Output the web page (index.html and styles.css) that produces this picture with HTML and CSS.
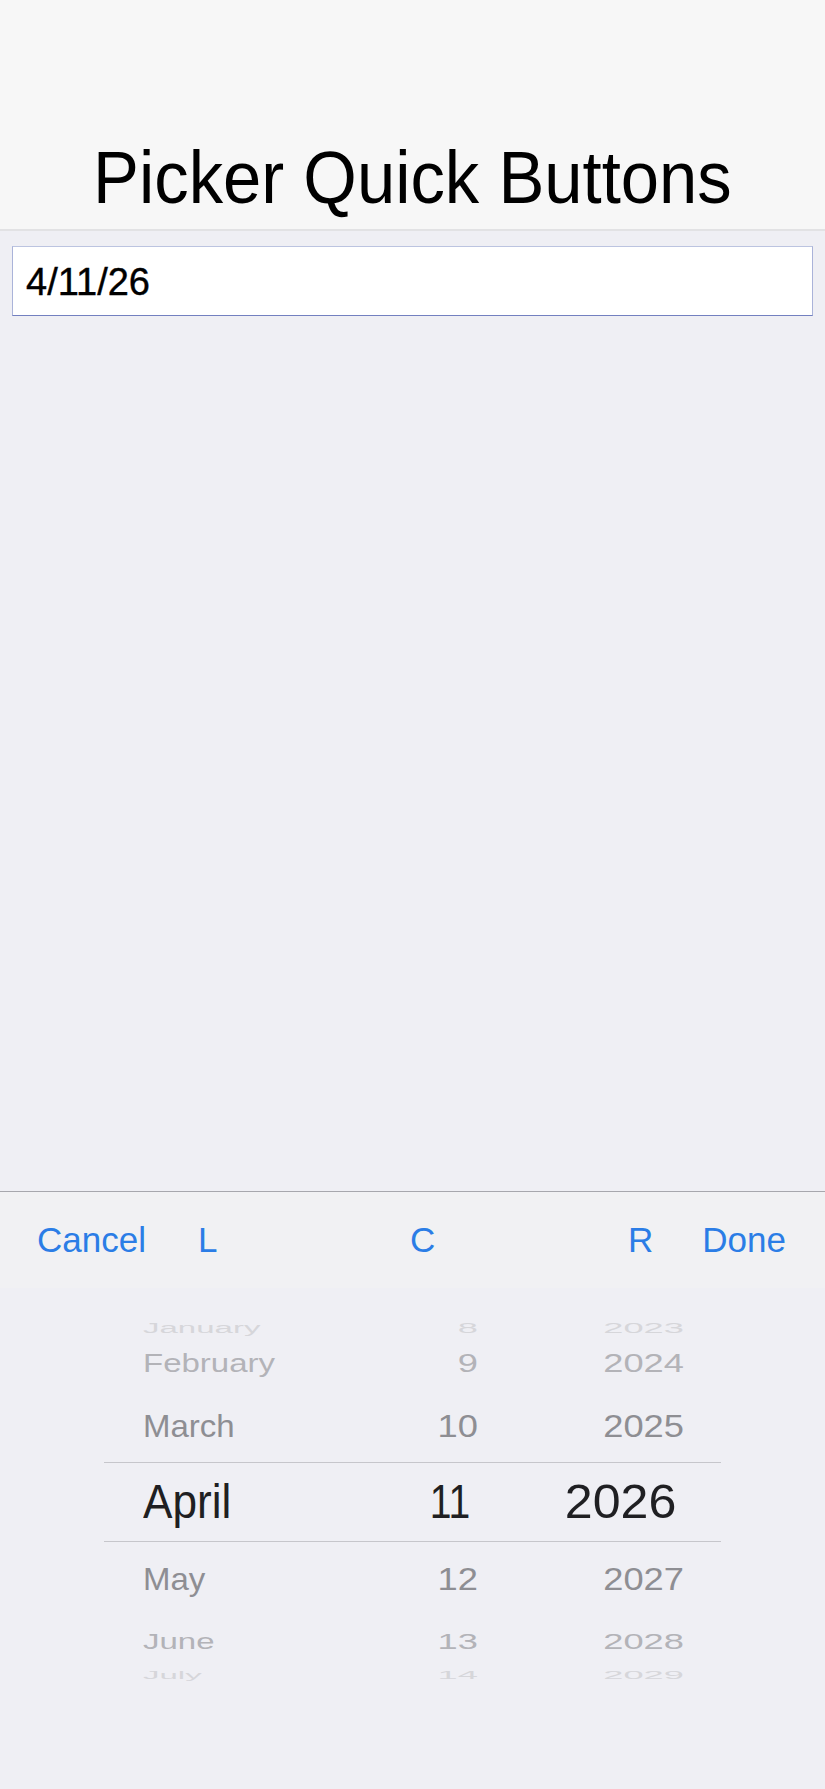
FILE: index.html
```html
<!DOCTYPE html>
<html lang="en">
<head>
<meta charset="utf-8">
<title>Picker Quick Buttons</title>
<link rel="stylesheet" href="styles.css">
</head>
<body>
<div class="app">
  <header class="navbar">
    <h1 class="title">Picker Quick Buttons</h1>
  </header>
  <div class="field"><input class="field-input" type="text" value="4/11/26" readonly></div>
  <section class="sheet">
    <div class="toolbar">
      <span class="btn">Cancel</span>
      <span class="btn btn-l">L</span>
      <span class="spacer"></span>
      <span class="btn">C</span>
      <span class="spacer"></span>
      <span class="btn">R</span>
      <span class="btn btn-done">Done</span>
    </div>
    <div class="picker">
      <div class="wheel">
        <div class="row r-3"><span class="cell">January</span><span class="cell num">8</span><span class="cell num">2023</span></div>
        <div class="row r-2"><span class="cell">February</span><span class="cell num">9</span><span class="cell num">2024</span></div>
        <div class="row r-1"><span class="cell">March</span><span class="cell num">10</span><span class="cell num">2025</span></div>
        <div class="row r0"><span class="cell">April</span><span class="cell num day">11</span><span class="cell num year">2026</span></div>
        <div class="row r1"><span class="cell">May</span><span class="cell num">12</span><span class="cell num">2027</span></div>
        <div class="row r2"><span class="cell">June</span><span class="cell num">13</span><span class="cell num">2028</span></div>
        <div class="row r3"><span class="cell">July</span><span class="cell num">14</span><span class="cell num">2029</span></div>
      </div>
    </div>
  </section>
</div>
</body>
</html>
```
FILE: styles.css
```css
* { box-sizing: border-box; }
html, body { margin: 0; padding: 0; }
body {
  background: #efeff4;
  font-family: "Liberation Sans", Arial, sans-serif;
  color: #000;
}
.app {
  display: flex;
  flex-direction: column;
  height: 1789px;
  overflow: hidden;
}
.navbar {
  height: 231px;
  background: #f7f7f7;
  border-bottom: 2px solid #e2e2e4;
  display: flex;
  align-items: flex-end;
  justify-content: center;
  padding-bottom: 14px;
}
.title {
  margin: 0;
  font-size: 74px;
  line-height: 74px;
  font-weight: normal;
  display: inline-block;
  transform: scaleX(0.93);
  white-space: nowrap;
  color: #000;
}
.field {
  margin: 15px 12px 0 12px;
}
.field-input {
  display: block;
  width: 801px;
  height: 70px;
  margin: 0;
  padding: 2px 13px 0 13px;
  background: #fff;
  border: 1px solid #aab3d9;
  border-top-color: #bcc4e0;
  border-bottom-color: #7380c0;
  border-radius: 0;
  font-family: "Liberation Sans", Arial, sans-serif;
  font-size: 38px;
  color: #000;
  -webkit-text-stroke: 0.4px #000;
  outline: none;
}
.sheet {
  margin-top: auto;
  display: flex;
  flex-direction: column;
}
.toolbar {
  display: flex;
  align-items: center;
  height: 97px;
  border-top: 1px solid #a7a7ad;
  background: #f1f1f3;
  padding: 0 39px 0 37px;
}
.btn {
  font-size: 35px;
  line-height: 44px;
  color: #2b7de6;
  white-space: nowrap;
}
.btn-l { margin-left: 52px; }
.btn-done { margin-left: 49px; }
.spacer { flex: 1; }
.picker {
  height: 501px;
  background: #efeff4;
  padding-top: 29px;
}
.wheel {
  width: 617px;
  margin: 0 auto;
  display: flex;
  flex-direction: column;
  overflow: hidden;
}
.row {
  display: grid;
  grid-template-columns: 224px 111px 206px;
  padding: 0 37px 0 39px;
  font-size: 33px;
  color: #8e8e93;
}
.cell {
  display: block;
  white-space: nowrap;
  transform-origin: left center;
}
.num {
  text-align: right;
  transform-origin: right center;
}
.r-3 { height: 22px; line-height: 22px; color: #d6d6da; }
.r-3 .cell { transform: scaleY(0.42); }
.r-3 .num { transform: scale(1.1, 0.42); }
.r-2 { height: 50px; line-height: 50px; color: #b3b3b8; }
.r-2 .cell { transform: scaleY(0.77); }
.r-2 .num { transform: scale(1.1, 0.77); }
.r-1 { height: 73px; line-height: 73px; color: #8e8e93; }
.r-1 .cell { transform: scaleY(0.97); }
.r-1 .num { transform: scale(1.1, 0.97); }
.r0 {
  height: 80px;
  line-height: 78px;
  border-top: 1px solid #c6c6cb;
  border-bottom: 1px solid #c6c6cb;
  font-size: 46px;
  color: #1f1f22;
}
.r0 .cell { transform: scale(0.96, 1.03); }
.r0 .day { padding-right: 9px; transform: scale(0.85, 1.03); }
.r0 .year { padding-right: 7px; transform: scale(1.09, 1.03); }
.r1 { height: 76px; line-height: 76px; color: #8e8e93; }
.r1 .cell { transform: scaleY(0.93); }
.r1 .num { transform: scale(1.1, 0.93); }
.r2 { height: 48px; line-height: 48px; color: #b3b3b8; }
.r2 .cell { transform: scaleY(0.68); }
.r2 .num { transform: scale(1.1, 0.68); }
.r3 { height: 19px; line-height: 19px; color: #d6d6da; }
.r3 .cell { transform: scaleY(0.32); }
.r3 .num { transform: scale(1.1, 0.32); }
```
